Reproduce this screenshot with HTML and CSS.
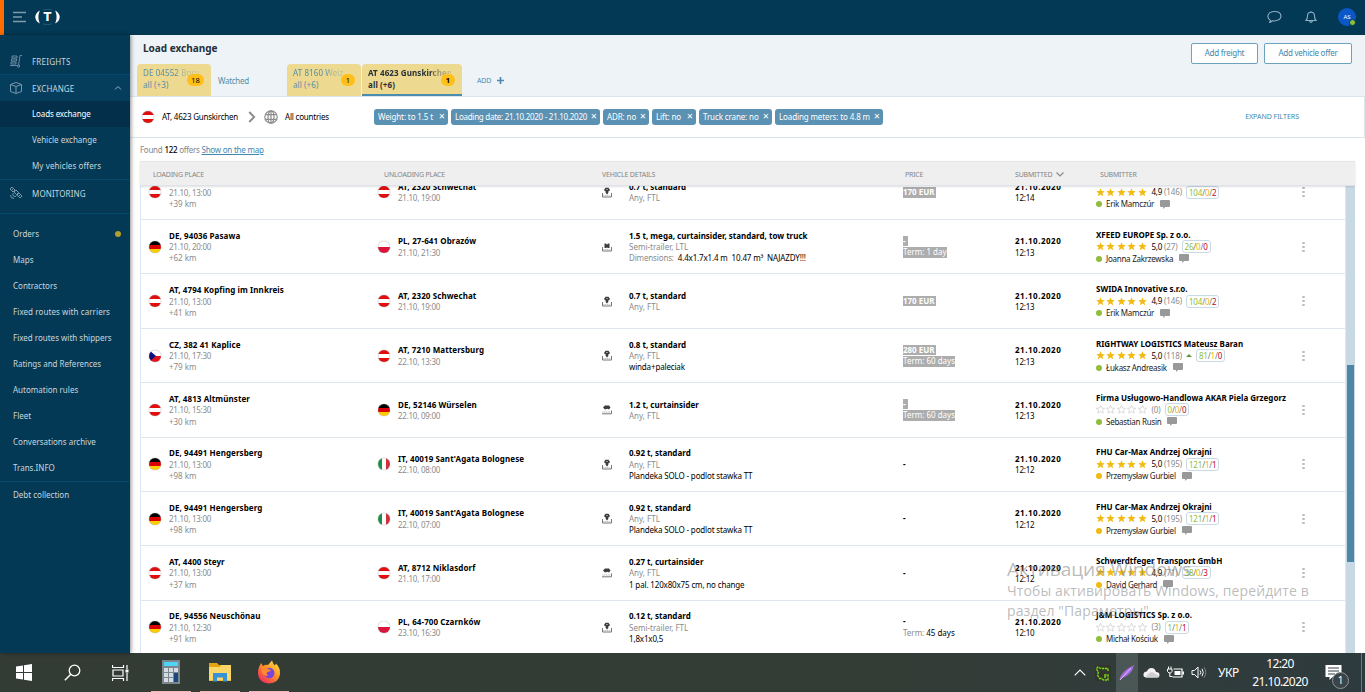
FILE: index.html
```html
<!DOCTYPE html>
<html lang="en">
<head>
<meta charset="utf-8">
<title>Load exchange</title>
<link rel="stylesheet" href="styles.css">
</head>
<body>
<div class="screen">
  <header class="topbar">
    <svg class="burger" width="14" height="12" viewBox="0 0 14 12"><path d="M0 1.500h13M0 6h9M0 10.500h13" stroke="#7f9cac" stroke-width="1.400"/></svg>
    <div class="logo">
      <svg width="26" height="16" viewBox="0 0 26 16"><path d="M5 1.500C-1.300 4.500-1.300 11.500 5 14.500C2.900 10.500 2.900 5.500 5 1.500zM20 1.500C26.300 4.500 26.300 11.500 20 14.500C22.100 10.500 22.100 5.500 20 1.500z" fill="#fff"/><path d="M8 1q4.500-1.300 9 0M8 15q4.500 1.300 9 0" fill="none" stroke="#45697f" stroke-width=".6"/></svg>
      <b>T</b>
    </div>
    <div class="topicons">
      <svg width="16" height="14" viewBox="0 0 16 14"><path d="M3.700 10.600C-1.200 7.500.5 1.500 7.800 1.500S16.500 9.500 8.500 10.800Q6.500 11.200 5.300 10.900Q4 12.300 2 12.300Q3.500 11.800 3.700 10.600z" fill="none" stroke="#8fb0c5" stroke-width="1.100"/></svg>
      <svg width="12" height="14" viewBox="0 0 12 14"><path d="M1 10.500Q2.500 9 2.500 6Q2.500 2.300 6 2.300T9.500 6Q9.500 9 11 10.500zM6 2V1M4.500 11Q6 13.800 7.500 11" fill="none" stroke="#8fb0c5" stroke-width="1.100"/></svg>
      <div class="avatar">AS<i></i></div>
    </div>
  </header>

  <div class="body">
    <nav class="side">
      <a class="main freights"><svg width="14" height="14" viewBox="0 0 14 14"><path d="M3 2h5v2H3zM2.500 5h5v2h-5zM2 8h5v2H2zM1 11.500h7M13 1.500h-2L9.500 11.500" fill="none" stroke="#6889a0"/><circle cx="9.500" cy="12" r="1.200" fill="none" stroke="#6889a0"/></svg><span>FREIGHTS</span></a>
      <a class="main exchange"><svg width="14" height="14" viewBox="0 0 14 14"><path d="M1.500 3.500L7 1.500l5.500 2v7L7 12.500l-5.500-2zL7 5.500l5.500-2M7 5.500v7" fill="none" stroke="#7897ab"/></svg><span>EXCHANGE</span><svg class="up" width="8" height="6" viewBox="0 0 8 6"><path d="M1 4.500L4 1.500l3 3" fill="none" stroke="#9bb2c1"/></svg></a>
      <a class="sub active">Loads exchange</a>
      <a class="sub">Vehicle exchange</a>
      <a class="sub">My vehicles offers</a>
      <a class="main monitoring"><svg width="14" height="14" viewBox="0 0 14 14"><path d="M1 3l2-2 3 3-2 2zM8 9l2-2 3 3-2 2zM5 6l2-2 2.500 2.500-2 2zM2.500 4.500l2-2M9.500 10.500l2-2M4.500 7Q3 8.500 4.500 10T7.500 9.500M1.500 9Q1.500 12.500 5 12.500" fill="none" stroke="#7897ab"/></svg><span>MONITORING</span></a>
      <div class="links">
        <a>Orders<i></i></a><a>Maps</a><a>Contractors</a><a>Fixed routes with carriers</a><a>Fixed routes with shippers</a><a>Ratings and References</a><a>Automation rules</a><a>Fleet</a><a>Conversations archive</a><a>Trans.INFO</a>
      </div>
      <a class="debt">Debt collection</a>
    </nav>

    <main class="content">
      <section class="head">
        <div class="headleft">
          <h1>Load exchange</h1>
          <div class="tabs">
            <div class="tab t1"><div><span class="fade">DE 04552 Borna</span><span>all (+3)</span></div><em>18</em></div>
            <div class="tab plain">Watched</div>
            <div class="tab t2"><div><span class="fade">AT 8160 Weiz</span><span>all (+6)</span></div><em>1</em></div>
            <div class="tab t3"><div><span class="fade">AT 4623 Gunskirchen</span><span>all (+6)</span></div><em>1</em></div>
            <div class="add">ADD <svg width="7" height="7" viewBox="0 0 7 7"><path d="M3.500 0v7M0 3.500h7" stroke="#4e8bae" stroke-width="1.700"/></svg></div>
          </div>
        </div>
        <div class="buttons"><button class="b1">Add freight</button><button class="b2">Add vehicle offer</button></div>
      </section>

      <section class="filters">
        <span class="flagslot" data-flag="AT"></span>
        <span class="route r1">AT, 4623 Gunskirchen</span>
        <svg class="arrow" width="8" height="12" viewBox="0 0 8 12"><path d="M1.200 1l5 5-5 5" fill="none" stroke="#8a8a8a" stroke-width="1.800"/></svg>
        <svg class="globe" width="14" height="14" viewBox="0 0 14 14"><g fill="none" stroke="#8c8c8c" stroke-width="1.200"><circle cx="7" cy="7" r="6.200"/><ellipse cx="7" cy="7" rx="3" ry="6.200"/><path d="M1.500 4.700h11M1.500 9.300h11M7 1v12"/></g></svg>
        <span class="route r2">All countries</span>
        <div class="chips">
          <span class="chip c1">Weight: to 1.5 t</span><span class="chip c2">Loading date: 21.10.2020 - 21.10.2020</span><span class="chip c3">ADR: no</span><span class="chip c4">Lift: no</span><span class="chip c5">Truck crane: no</span><span class="chip c6">Loading meters: to 4.8 m</span>
        </div>
        <a class="expand">EXPAND FILTERS</a>
      </section>

      <p class="found">Found <b>122</b> offers <a>Show on the map</a></p>

      <section class="table">
        <div class="thead grid">
          <span class="h1c">LOADING PLACE</span><span class="h2c">UNLOADING PLACE</span><span>VEHICLE DETAILS</span><span class="h4c">PRICE</span><span>SUBMITTED <svg width="8" height="5" viewBox="0 0 8 5"><path d="M.5.5L4 4 7.500.5" fill="none" stroke="#8a8a8a" stroke-width="1.200"/></svg></span><span class="h6c">SUBMITTER</span>
        </div>
        <div class="scroll"><div class="rows" id="rows"></div><div class="track"><div class="thumb"></div></div></div>
      </section>
    </main>
  </div>

  <footer class="taskbar">
    <svg class="win" width="16" height="17" viewBox="0 0 16 17"><path d="M0 2.500L7 1.500v6.500H0zM8 1.300L16 0v8H8zM0 9h7v6.500L0 14.500zM8 9h8v8L8 15.700z" fill="#fff"/></svg>
    <svg class="search" width="17" height="17" viewBox="0 0 17 17"><circle cx="10.500" cy="6.500" r="5.300" fill="none" stroke="#fff" stroke-width="1.300"/><path d="M6.800 10.300L.8 16.300" stroke="#fff" stroke-width="1.400"/></svg>
    <svg class="tview" width="17" height="16" viewBox="0 0 17 16"><path d="M.5 0v2.500h11V0M.5 16v-2.500h11V16M1 5h10v6H1zM15 0v4M15 8v8" fill="none" stroke="#fff" stroke-width="1.200"/><path d="M13.500 4.500h3v3h-3z" fill="#fff"/></svg>
    <div class="app a1"><svg width="18" height="24" viewBox="0 0 18 24"><path d="M0 0h18v24H0z" fill="#7b868d"/><path d="M2 2h14v4H2z" fill="#4dd5f8"/><path d="M2 8h4v4H2zM7 8h4v4H7zM12 8h4v4h-4zM2 13h4v4H2zM7 13h4v4H7zM2 18h4v4H2zM7 18h4v4H7z" fill="#d4dce2"/><path d="M12 13h4v9h-4z" fill="#17497c"/></svg></div>
    <div class="app a2"><svg width="22" height="19" viewBox="0 0 22 19"><path d="M0 0h8l2 2h12v16H0z" fill="#e5a511"/><path d="M0 4h11l1-2h10v15.500H0z" fill="#fcd667"/><path d="M4 10h14v8.500h-4v-4H8v4H4z" fill="#3693d8"/></svg></div>
    <div class="app a3"><svg width="24" height="24" viewBox="0 0 24 24"><defs><linearGradient id="ff" x1="1" y1="0" x2=".2" y2="1"><stop offset="0" stop-color="#fff44b"/><stop offset=".45" stop-color="#ff9a28"/><stop offset="1" stop-color="#f0285e"/></linearGradient></defs><path d="M2 7l2-4 2 3q3-2 5-1l4-4.500Q16 4 18 5.500l1-2Q23.500 8 23 14.500 21.500 23 12 23.500 2 23 1 14 .8 10 2 7z" fill="url(#ff)"/><circle cx="12.300" cy="13" r="5.200" fill="#7a45d8"/><path d="M4 7q5-1 7 2l3 1q-1 2-4 2-1 2 1 4-5 0-6-4z" fill="#ff8b2c"/></svg></div>
    <div class="tray">
      <svg class="caret" width="12" height="7" viewBox="0 0 12 7"><path d="M.7 6.300L6 1l5.300 5.300" fill="none" stroke="#fff" stroke-width="1.200"/></svg>
      <svg class="snip" width="16" height="16" viewBox="0 0 16 16"><path d="M0 0h16v16H0z" fill="#33352c"/><path d="M13 6V3.500H6L2.500 2 1.500 4.500 3.500 7 2.500 10 4 13M4 13.500h3l1.500 1.500H13v-5H9M9 12h2" fill="none" stroke="#78df18" stroke-width="1.300" stroke-dasharray="2.500 .7"/></svg>
      <div class="feather"><svg width="16" height="17" viewBox="0 0 16 17"><path d="M.5 16Q1 8 15 1Q13 11 3 14z" fill="#a66ae0"/><path d="M1 16L12 4" stroke="#eadbff" stroke-width=".8"/></svg></div>
      <svg class="cloud" width="17" height="11" viewBox="0 0 17 11"><path d="M3 10.500Q0 10 .5 7t3.500-2.500Q5 1 8.500 1T13 5Q16.500 5 16.500 8T14 10.500z" fill="#f2f2f2"/><path d="M3 10.500Q4 6 9 5l7 4q-.5 1.500-2 1.500z" fill="#cfcfcf"/></svg>
      <svg class="batt" width="17" height="13" viewBox="0 0 17 13"><path d="M6.500 3h8.500v8H5.500" fill="none" stroke="#fff" stroke-width="1.200"/><path d="M7.500 5h6v4h-6zM15.500 5.500h1.500v3h-1.500z" fill="#fff"/><path d="M1.500.5v2.500M4 .5v2.500M.5 3h4.500v2.500L3.700 7H2L.5 5.500zM2.800 7v3.500h2.500" fill="none" stroke="#fff"/></svg>
      <svg class="vol" width="17" height="13" viewBox="0 0 17 13"><path d="M1 4.500h2.500l3.500-3.500v11L3.500 8.500H1z" fill="none" stroke="#fff"/><path d="M9 4.500q1.500 2 0 4M11 2.800q2.500 3.700 0 7.400" fill="none" stroke="#fff"/><path d="M13 1.300q3.600 5.200 0 10.400" fill="none" stroke="#7b8587"/></svg>
      <span class="lang">УКР</span>
      <span class="clock">12:20<br>21.10.2020</span>
      <div class="note"><svg width="17" height="17" viewBox="0 0 17 17"><path d="M.5 1h16v12h-9l-3 3v-3h-4z" fill="#fff"/><path d="M3 4h11M3 7h11M3 10h7" stroke="#354043"/></svg><b>1</b></div>
      <i class="edge"></i>
    </div>
  </footer>

  <div class="watermark"><div class="wm1">Активация Windows</div><div class="wm2">Чтобы активировать Windows, перейдите в<br>раздел "Параметры"</div></div>
</div>
<script src="script.js"></script>
</body>
</html>
```
FILE: styles.css
```css
* { box-sizing: border-box; }
body { margin: 0; font-family: "Noto Sans", sans-serif; font-size: 8px; color: #000; overflow: hidden; }
svg { display: block; flex: none; }
i, em { font-style: normal; }
.screen { position: relative; width: 1365px; height: 692px; display: flex; flex-direction: column; background: #fff; overflow: hidden; }

.topbar { height: 35px; flex: none; background: #033955; border-left: 4px solid #ff6c00; display: flex; align-items: center; padding-left: 9px; padding-bottom: 1px; }
.burger { margin-right: 8px; }
.logo { display: grid; width: 26px; height: 16px; place-items: center; }
.logo > * { grid-area: 1 / 1; }
.logo b { color: #fff; font: bold 11.500px/16px "DejaVu Sans", sans-serif; padding-right: 1px; }
.topicons { margin-left: auto; display: flex; align-items: center; padding-right: 9px; }
.topicons svg:first-child { margin-right: 22px; }
.avatar { position: relative; width: 18px; height: 18px; border-radius: 50%; background: #0a57c8; color: #fff; font-size: 6px; line-height: 18px; text-align: center; margin-left: 21px; }
.avatar i { position: absolute; right: 0; bottom: 0; width: 7px; height: 7px; border-radius: 50%; background: #8fbe3b; border: 1px solid #033955; }

.body { display: flex; height: 618px; flex: none; }
.side { width: 130px; flex: none; background: #033955; color: #c9d6dd; display: flex; flex-direction: column; padding-top: 13px; box-shadow: 1px 0 4px rgba(0,0,0,.45); z-index: 1; }
.side a { display: flex; align-items: center; height: 26px; white-space: nowrap; padding-bottom: 1px; }
.side .main { height: 27px; padding-left: 9px; gap: 9px; border-bottom: 1px solid #04496d; }
.side .main span { letter-spacing: .12px; }
.side .freights { padding-bottom: 0; }
.side .freights span { letter-spacing: .22px; }
.side .exchange { border: 0; background: #053e5c; height: 26px; padding-bottom: 0; }
.side .up { margin-left: auto; margin-right: 8px; }
.side .sub { padding-left: 32px; }
.side .sub:nth-child(5) { letter-spacing: .1px; }
.side .active { background: #032f4b; color: #fff; letter-spacing: -.12px; }
.side .monitoring { height: 35px; border-top: 1px solid #04496d; padding-bottom: 7px; }
.links { padding-top: 7px; border-bottom: 1px solid #04496d; }
.side .links a, .side .debt { padding-left: 13px; padding-bottom: 1px; }
.side .links a:nth-child(4) { letter-spacing: .08px; }
.links i { width: 6px; height: 6px; border-radius: 3px; background: #b39e2e; margin: 0 9px 0 auto; }

.content { flex: 1; min-width: 0; }
.head { height: 62px; background: #edf3f6; border-bottom: 1px solid #dde5ec; display: flex; justify-content: space-between; }
.headleft { padding-left: 7px; }
h1 { margin: 0 0 0 6px; font-size: 10px; line-height: 14px; padding-top: 6px; height: 29px; color: #26303a; }
.tabs { display: flex; height: 32px; }
.tab { height: 32px; border-radius: 4px 4px 0 0; background: #edd98f; color: #568fa8; display: flex; padding: 3px 5px 0 6px; line-height: 12px; }
.tab div { flex: 1; min-width: 0; }
.tab div span { display: block; white-space: nowrap; letter-spacing: .1px; }
.tab .fade { width: 57px; overflow: hidden; -webkit-mask-image: linear-gradient(90deg, #000 58%, rgba(0,0,0,.5) 64%, rgba(0,0,0,.2) 95%); mask-image: linear-gradient(90deg, #000 58%, rgba(0,0,0,.5) 64%, rgba(0,0,0,.2) 95%); }
.tab em { width: 17px; height: 12px; border-radius: 6px; background: #ffbe19; color: #000; text-align: center; margin-top: 7px; margin-left: -12px; font-size: 7.500px; position: relative; }
.t1 { width: 74px; }
.t1 em { margin-right: 2px; }
.plain { background: none; width: 76px; padding: 11px 0 0 7px; }
.plain { letter-spacing: -.3px; }
.t2 { width: 74px; }
.tab.t2 em, .tab.t3 em { width: 14px; margin-right: 2px; }
.tab.t2 em { margin-right: 1px; }
.t3 { width: 100px; margin-left: 1px; font-weight: bold; color: #26303a; border-bottom: 2px solid #4b8caf; }
.t3 .fade { width: 83px; -webkit-mask-image: linear-gradient(90deg, #000 77%, rgba(0,0,0,.5) 80%, rgba(0,0,0,.12)); mask-image: linear-gradient(90deg, #000 77%, rgba(0,0,0,.5) 80%, rgba(0,0,0,.12)); }
.t3 em { font-weight: bold; }
.add { display: flex; align-items: center; gap: 6px; margin: 1px 0 0 15px; font-size: 7px; color: #4e8bae; letter-spacing: -.15px; }
.buttons { display: flex; padding: 8px 13px 0 0; gap: 6px; }
.buttons button { height: 21px; padding: 0 0 1px; border: 1px solid #6ea2c0; border-radius: 2px; background: #fff; color: #4387ac; font: 8px/18px "Noto Sans", sans-serif; letter-spacing: -.25px; }
.b1 { width: 67px; }
.b2 { width: 88px; }

.filters { height: 41px; border-bottom: 1px solid #dde5ec; border-right: 1px solid #dde5ec; display: flex; align-items: center; padding: 0 0 1px 12px; }
.flag { width: 12px; height: 12px; border-radius: 50%; box-shadow: 0 0 1px rgba(0,0,0,.55); }
.route { letter-spacing: -.22px; margin-left: 8px; white-space: nowrap; }
.r1 { width: 77px; }
.arrow { margin: 0 8px 0 9px; }
.r2 { letter-spacing: -.2px; width: 89px; margin-left: 7px; }
.chips { display: flex; gap: 3px; }
.chip { height: 16px; line-height: 16px; border-radius: 3px; background: #5b91b2; color: #fff; padding: 0 3px 0 4px; white-space: nowrap; letter-spacing: -.12px; display: flex; justify-content: space-between; }
.chip::after { content: "✕"; font: bold 8px/16px "DejaVu Sans", sans-serif; }
.c1 { width: 74px; }
.c2 { width: 149px; letter-spacing: -.27px; }
.c3 { width: 46px; }
.c4 { width: 44px; }
.c5 { width: 73px; }
.c6 { width: 108px; }
.expand { margin: 0 65px 0 auto; font-size: 7px; color: #4387ac; letter-spacing: -.02px; }

.found { margin: 0; padding: 5px 0 0 10px; height: 23px; line-height: 13px; color: #858585; letter-spacing: -.3px; word-spacing: .3px; }
.found b { color: #000; font-weight: 500; }
.found a { color: #4387ac; text-decoration: underline; }

.table { margin-left: 10px; width: 1215px; }
.grid { display: grid; grid-template-columns: 237px 224px 301px 112px 81px 201px 1fr; align-items: center; }
.thead { height: 25px; background: #efefef; border-top: 1px solid #e2e6ea; border-bottom: 1px solid #dde3e8; box-shadow: 0 1px 2px rgba(0,0,0,.12); position: relative; z-index: 1; font-size: 7px; color: #858585; letter-spacing: -.2px; padding-left: 1px; }
.thead span { display: flex; align-items: center; gap: 4px; padding-top: 1px; }
.thead .h1c { padding-left: 12px; }
.thead .h2c { padding-left: 6px; }
.thead .h4c { padding-left: 2px; }
.thead .h6c { padding-left: 4px; }
.scroll { height: 467px; display: flex; overflow: hidden; }
.rows { width: 1206px; flex: none; height: 467px; overflow: hidden; border-left: 1px solid #dfe6ee; border-right: 1px solid #dfe6ee; }
.row { height: 54.370px; border-bottom: 1px solid #dfe6ee; line-height: 11.300px; white-space: nowrap; }
.row:first-child { margin-top: -20.250px; }
.row b { display: block; }
.place { display: flex; align-items: center; gap: 8px; }
.place b { letter-spacing: .09px; }
.load { padding-left: 8px; }
.muted { color: #8b8b8b; display: block; }
.place .muted { letter-spacing: -.25px; }
.place .muted + .muted { letter-spacing: -.02px; }
.veh { display: flex; align-items: center; }
.veh svg { margin-right: 17px; }
.extra { display: block; letter-spacing: -.15px; }
.extra .label { color: #8b8b8b; }
.price { display: flex; flex-direction: column; align-items: flex-start; gap: 1px; line-height: 10.500px; }
.price .muted { letter-spacing: -.02px; }
.price .muted span { color: #000; }
.price .sel { background: #adadad; color: #fff; letter-spacing: 0; }
.price b.sel { letter-spacing: -.02px; padding-right: 2px; }
.date b { letter-spacing: .52px; }
.date span { letter-spacing: -.2px; }
.sub6 { line-height: 12px; }
.rating { display: flex; align-items: center; height: 12px; letter-spacing: -.25px; }
.stars { display: flex; gap: 1.500px; margin: 0 5px 0 -.5px; }
.score { margin-right: 2px; }
.score:empty { margin-right: 0; }
.cnt { color: #8b8b8b; margin-right: 4px; letter-spacing: -.12px; }
.tri { border: 3px solid transparent; border-top: 0; border-bottom-color: #5c9a3c; margin: 0 4px 0 0; }
.pill { border: 1px solid #c9dae5; border-radius: 3px; height: 13px; line-height: 12px; padding: 0 2px; color: #777; letter-spacing: -.2px; }
.pill .g { color: #8fbe3b; }
.pill .y { color: #f0b400; }
.pill .r { color: #c8001e; }
.person { display: flex; align-items: center; letter-spacing: -.26px; color: #222; }
.person i { width: 6px; height: 6px; border-radius: 50%; margin-right: 4px; background: #8fbe3b; }
.person i.away { background: #f2bb13; }
.person svg { margin-left: 6px; }
.dots { display: grid; gap: 2px; margin-left: 5px; justify-content: start; }
.dots i { width: 3px; height: 2px; border-radius: 1px; background: #bdbdbd; }
.track { width: 9px; background: #c9d9e3; padding: 179px 1px 0; }
.thumb { height: 197px; background: #4e87a5; }

.taskbar { height: 39px; flex: none; background: linear-gradient(90deg, #333b35, #343c36 65%, #2e3b3e); display: flex; align-items: center; padding-left: 16px; color: #fff; position: relative; }
.search { margin-left: 32px; }
.tview { margin: 0 0 0 31px; }
.app { width: 40px; height: 39px; border-bottom: 1px solid #f4b5b5; display: flex; align-items: center; justify-content: center; margin-left: 9px; }
.a1 { margin-left: 22px; }
.tray { margin-left: auto; display: flex; align-items: center; height: 39px; }
.caret { margin-right: 9px; }
.feather { width: 22px; height: 39px; background: #4b5755; display: flex; align-items: center; justify-content: center; margin: 0 5px 0 5px; }
.batt { margin: 0 7px 0 7px; }
.lang { font: 12px/20px "Noto Sans", sans-serif; margin-left: 10px; width: 22px; letter-spacing: -.5px; }
.clock { font: 12px/18px "Noto Sans", sans-serif; letter-spacing: -.6px; text-align: center; width: 58px; margin-left: 11px; }
.note { position: relative; margin-left: 16px; }
.note b { position: absolute; left: 7px; top: 8px; width: 17px; height: 17px; border-radius: 50%; background: #3b4548; border: 1px solid #8d9799; font: 10px/15px "Noto Sans", sans-serif; text-align: center; }
.edge { width: 1px; height: 39px; background: #6d7779; margin: 0 3px 0 19px; }

.watermark { position: absolute; left: 1007px; top: 557px; color: rgba(130,130,130,.55); z-index: 3; white-space: nowrap; font-family: "Open Sans", sans-serif; }
.wm1 { font-size: 19px; line-height: 24px; letter-spacing: -.02px; }
.wm2 { font-size: 14px; line-height: 20px; letter-spacing: .1px; }
```
FILE: script.js
```js
const H = (...c) => c.map((f, i) => `<rect y="${i * 12 / c.length}" width="12" height="${12 / c.length}" fill="${f}"/>`).join('');
const FLAGS = {
  AT: H('#e20d0d', '#fff', '#e20d0d'),
  DE: H('#000', '#dd0000', '#ffce00'),
  PL: H('#fff', '#dc143c'),
  CZ: H('#fff', '#e3121c') + '<path d="M0 0l7 6-7 6z" fill="#10107a"/>',
  IT: '<rect width="4" height="12" fill="#1c9145"/><rect x="4" width="4" height="12" fill="#fff"/><rect x="8" width="4" height="12" fill="#d0303a"/>'
};
const flag = c => `<svg class="flag" width="12" height="12" viewBox="0 0 12 12">${FLAGS[c]}<circle cx="6" cy="6" r="5.700" fill="none" stroke="#888" stroke-opacity=".3" stroke-width=".6"/></svg>`;

// Loading bay pictograms: top loading, rear loading (LTL) and side loading
const TRAY = '<path d="M.5 6v4h9V6" fill="none" stroke="#777" stroke-width="1"/><path d="M1.500 8.500h7" stroke="#999" stroke-width=".7" stroke-dasharray="1 .7"/>';
const LOADS = {
  top: TRAY + '<path d="M3.500.8h3L8 3 7 4.200H6.300V6L5 7.500 3.700 6V4.200H3L2 3z" fill="#3d3d3d"/><path d="M4 2.500h2" stroke="#aaa" stroke-width=".8"/>',
  ltl: TRAY + '<path d="M2.500 2.500v4.500h2L5 6l.5 1h2V2.500H6L5 3.700 4 2.500z" fill="#3d3d3d"/>',
  side: '<path d="M0 9.800h9.500V6.500" fill="none" stroke="#777"/><path d="M.5 8h8" stroke="#999" stroke-width=".8" stroke-dasharray="1 .7"/><path d="M1 3.500L3 1.500h4L8.500 3.500 7 5.500 5.500 4.800 3 5.500z" fill="#3d3d3d"/>'
};
const load = t => `<svg width="10" height="11" viewBox="0 0 10 11">${LOADS[t]}</svg>`;
const star = on => `<svg width="9" height="9" viewBox="0 0 9 9"><path d="M4.500.3l1.200 2.800 3 .2-2.300 1.900.8 3-2.700-1.600-2.700 1.600.8-3L.3 3.300l3-.2z" fill="${on ? '#f2bb13' : '#fff'}" stroke="${on ? 'none' : '#c4c4c4'}" stroke-width=".6"/></svg>`;
const BUBBLE = '<svg width="10" height="9" viewBox="0 0 10 9"><path d="M1 0h8q1 0 1 1v5q0 1-1 1H5L3.500 9 3 7H1Q0 7 0 6V1q0-1 1-1z" fill="#999"/></svg>';

const data = [
  ['AT', '&nbsp;', '21.10, 13:00', '+39 km', 'AT', 'AT, 2320 Schwechat', '21.10, 19:00', 'top', '0.7 t, standard', 'Any, FTL', '', 'S170 EUR', '', '12:14', '&nbsp;', '4,9', '146', '104/0/2', 'Erik Mamczúr'],
  ['DE', 'DE, 94036 Pasawa', '21.10, 20:00', '+62 km', 'PL', 'PL, 27-641 Obrazów', '21.10, 21:30', 'ltl', '1.5 t, mega, curtainsider, standard, tow truck', 'Semi-trailer, LTL', '<span class="label">Dimensions:</span>&nbsp; 4.4x1.7x1.4 m&nbsp; 10.47 m³&nbsp; NAJAZDY!!!', 'S-', 'STerm: 1 day', '12:13', 'XFEED EUROPE Sp. z o.o.', '5,0', '27', '26/0/0', 'Joanna Zakrzewska'],
  ['AT', 'AT, 4794 Kopfing im Innkreis', '21.10, 13:00', '+41 km', 'AT', 'AT, 2320 Schwechat', '21.10, 19:00', 'top', '0.7 t, standard', 'Any, FTL', '', 'S170 EUR', '', '12:13', 'SWIDA Innovative s.r.o.', '4,9', '146', '104/0/2', 'Erik Mamczúr'],
  ['CZ', 'CZ, 382 41 Kaplice', '21.10, 17:30', '+79 km', 'AT', 'AT, 7210 Mattersburg', '22.10, 13:30', 'top', '0.8 t, standard', 'Any, FTL', 'winda+paleciak', 'S280 EUR', 'STerm: 60 days', '12:13', 'RIGHTWAY LOGISTICS Mateusz Baran', '5,0', '118', '81/1/0', 'Łukasz Andreasik', 'up'],
  ['AT', 'AT, 4813 Altmünster', '21.10, 15:30', '+30 km', 'DE', 'DE, 52146 Würselen', '22.10, 09:00', 'side', '1.2 t, curtainsider', 'Any, FTL', '', 'S-', 'STerm: 60 days', '12:13', 'Firma Usługowo-Handlowa AKAR Piela Grzegorz', '', '0', '0/0/0', 'Sebastian Rusin'],
  ['DE', 'DE, 94491 Hengersberg', '21.10, 13:00', '+98 km', 'IT', "IT, 40019 Sant'Agata Bolognese", '22.10, 08:00', 'top', '0.92 t, standard', 'Any, FTL', 'Plandeka SOLO - podlot stawka TT', '-', '', '12:12', 'FHU Car-Max Andrzej Okrajni', '5,0', '195', '121/1/1', 'Przemysław Gurbiel', 'away'],
  ['DE', 'DE, 94491 Hengersberg', '21.10, 13:00', '+98 km', 'IT', "IT, 40019 Sant'Agata Bolognese", '22.10, 07:00', 'top', '0.92 t, standard', 'Any, FTL', 'Plandeka SOLO - podlot stawka TT', '-', '', '12:12', 'FHU Car-Max Andrzej Okrajni', '5,0', '195', '121/1/1', 'Przemysław Gurbiel', 'away'],
  ['AT', 'AT, 4400 Steyr', '21.10, 13:00', '+37 km', 'AT', 'AT, 8712 Niklasdorf', '21.10, 17:00', 'side', '0.27 t, curtainsider', 'Any, FTL', '1 pal. 120x80x75 cm, no change', '-', '', '12:12', 'Schwerdtfeger Transport GmbH', '4,9', '71', '38/0/3', 'David Gerhard', 'away'],
  ['DE', 'DE, 94556 Neuschönau', '21.10, 12:30', '+91 km', 'PL', 'PL, 64-700 Czarnków', '23.10, 16:30', 'top', '0.12 t, standard', 'Semi-trailer, FTL', '1,8x1x0,5', '-', 'Term: <span>45 days</span>', '12:10', 'J&amp;M LOGISTICS Sp. z o.o.', '', '3', '1/1/1', 'Michał Kościuk']
];

const priceLine = (t, tag) => !t ? '' : t[0] === 'S'
  ? `<${tag} class="sel">${t.slice(1)}</${tag}>`
  : `<${tag} class="${tag === 'span' ? 'muted' : ''}">${t}</${tag}>`;

document.getElementById('rows').innerHTML = data.map(r => {
  const [lf, lp, lt, km, uf, up, ut, li, vb, vm, vx, p1, p2, time, firm, score, cnt, pill, person, mark] = r;
  const [g, y, d] = pill.split('/');
  return `<div class="row grid">
    <div class="place load">${flag(lf)}<div><b>${lp}</b><span class="muted">${lt}</span><span class="muted">${km}</span></div></div>
    <div class="place">${flag(uf)}<div><b>${up}</b><span class="muted">${ut}</span></div></div>
    <div class="veh">${load(li)}<div><b>${vb}</b><span class="muted">${vm}</span>${vx ? `<span class="extra">${vx}</span>` : ''}</div></div>
    <div class="price">${priceLine(p1, 'b')}${priceLine(p2, 'span')}</div>
    <div class="date"><b>21.10.2020</b><span>${time}</span></div>
    <div class="sub6"><b>${firm}</b>
      <div class="rating"><span class="stars">${star(score).repeat(5)}</span><span class="score">${score}</span><span class="cnt">(${cnt})</span>${mark === 'up' ? '<i class="tri"></i>' : ''}<span class="pill"><span class="g">${g}</span>/<span class="y">${y}</span>/<span class="r">${d}</span></span></div>
      <div class="person"><i class="${mark === 'away' ? 'away' : ''}"></i>${person}${BUBBLE}</div></div>
    <div class="dots"><i></i><i></i><i></i></div>
  </div>`;
}).join('');

document.querySelectorAll('[data-flag]').forEach(e => { e.innerHTML = flag(e.dataset.flag); });
```
